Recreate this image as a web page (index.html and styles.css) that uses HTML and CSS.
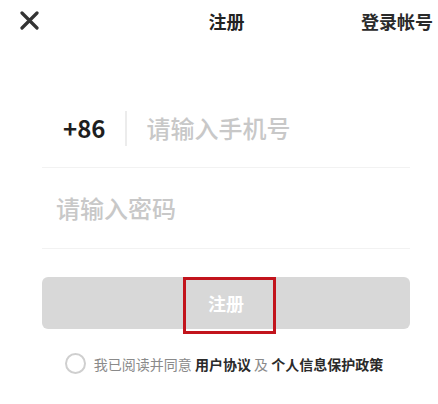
FILE: index.html
```html
<!DOCTYPE html>
<html lang="zh-CN">
<head>
<meta charset="utf-8">
<title>注册</title>
<link rel="stylesheet" href="styles.css">
</head>
<body>
<div class="page">
  <header class="topbar">
    <span class="close" aria-label="关闭">
      <svg width="19" height="19" viewBox="0 0 19 19"><path d="M2 2L17 17M17 2L2 17" stroke="#333" stroke-width="3.2" stroke-linecap="round" fill="none"/></svg>
    </span>
    <h1 class="title">注册</h1>
    <a class="login">登录帐号</a>
  </header>

  <form class="form">
    <div class="row phone-row">
      <span class="code">+86</span>
      <span class="divider"></span>
      <span class="placeholder">请输入手机号</span>
    </div>
    <div class="row pass-row">
      <span class="placeholder">请输入密码</span>
    </div>
    <div class="submit-wrap">
      <button type="button" class="submit">注册</button>
      <span class="highlight"></span>
    </div>
  </form>

  <div class="agree">
    <span class="radio"></span>
    <span class="agree-text">我已阅读并同意 <b>用户协议</b> 及 <b>个人信息保护政策</b></span>
  </div>
</div>
</body>
</html>
```

FILE: styles.css
```css
* { box-sizing: border-box; }
html, body {
  margin: 0;
  padding: 0;
  background: #fff;
}
body {
  font-family: "Noto Sans CJK SC", "Noto Sans", sans-serif;
  color: #222;
}
.page {
  width: 438px;
  height: 404px;
  overflow: hidden;
}
.topbar {
  display: grid;
  grid-template-columns: 1fr auto 1fr;
  align-items: center;
  height: 42px;
  padding: 0 5px 0 20px;
}
.close {
  display: flex;
  align-items: center;
  height: 19px;
  margin-top: -2px;
}
.title {
  margin: 0;
  font-size: 18px;
  font-weight: 700;
  line-height: 24px;
  color: #222;
}
.login {
  justify-self: end;
  font-size: 18px;
  font-weight: 700;
  line-height: 24px;
  color: #2a2a2a;
}
.form {
  margin: 0 28px 0 42px;
}
.row {
  display: flex;
  align-items: center;
  border-bottom: 1px solid #f2f2f2;
}
.phone-row {
  margin-top: 68px;
  height: 36px;
  box-sizing: content-box;
  padding: 0 0 21px 21px;
}
.code {
  font-size: 24px;
  font-weight: 700;
  color: #1e1e1e;
  line-height: 36px;
}
.divider {
  width: 2px;
  height: 35px;
  background: #ececec;
  margin: 0 19px 0 20px;
}
.placeholder {
  font-size: 24px;
  font-weight: 500;
  line-height: 36px;
  color: #c8c8c8;
}
.pass-row {
  height: 36px;
  box-sizing: content-box;
  padding: 22px 0 22px 14px;
}
.submit-wrap {
  position: relative;
  margin-top: 28px;
}
.submit {
  display: block;
  width: 100%;
  height: 52px;
  border: 0;
  border-radius: 6px;
  background: #d8d8d8;
  color: #fff;
  font-family: inherit;
  font-size: 18px;
  font-weight: 700;
  padding: 0;
}
.highlight {
  position: absolute;
  left: 141px;
  top: 0;
  width: 93px;
  height: 57px;
  border: 3px solid #c2141c;
}
.agree {
  display: flex;
  align-items: center;
  justify-content: center;
  margin-top: 24px;
  padding-left: 10px;
  gap: 8px;
}
.radio {
  width: 21px;
  height: 21px;
  border-radius: 50%;
  border: 2px solid #cfcfcf;
}
.agree-text {
  font-size: 14px;
  line-height: 20px;
  color: #8a8a8a;
}
.agree-text b {
  color: #2a2a2a;
  font-weight: 700;
}
```
